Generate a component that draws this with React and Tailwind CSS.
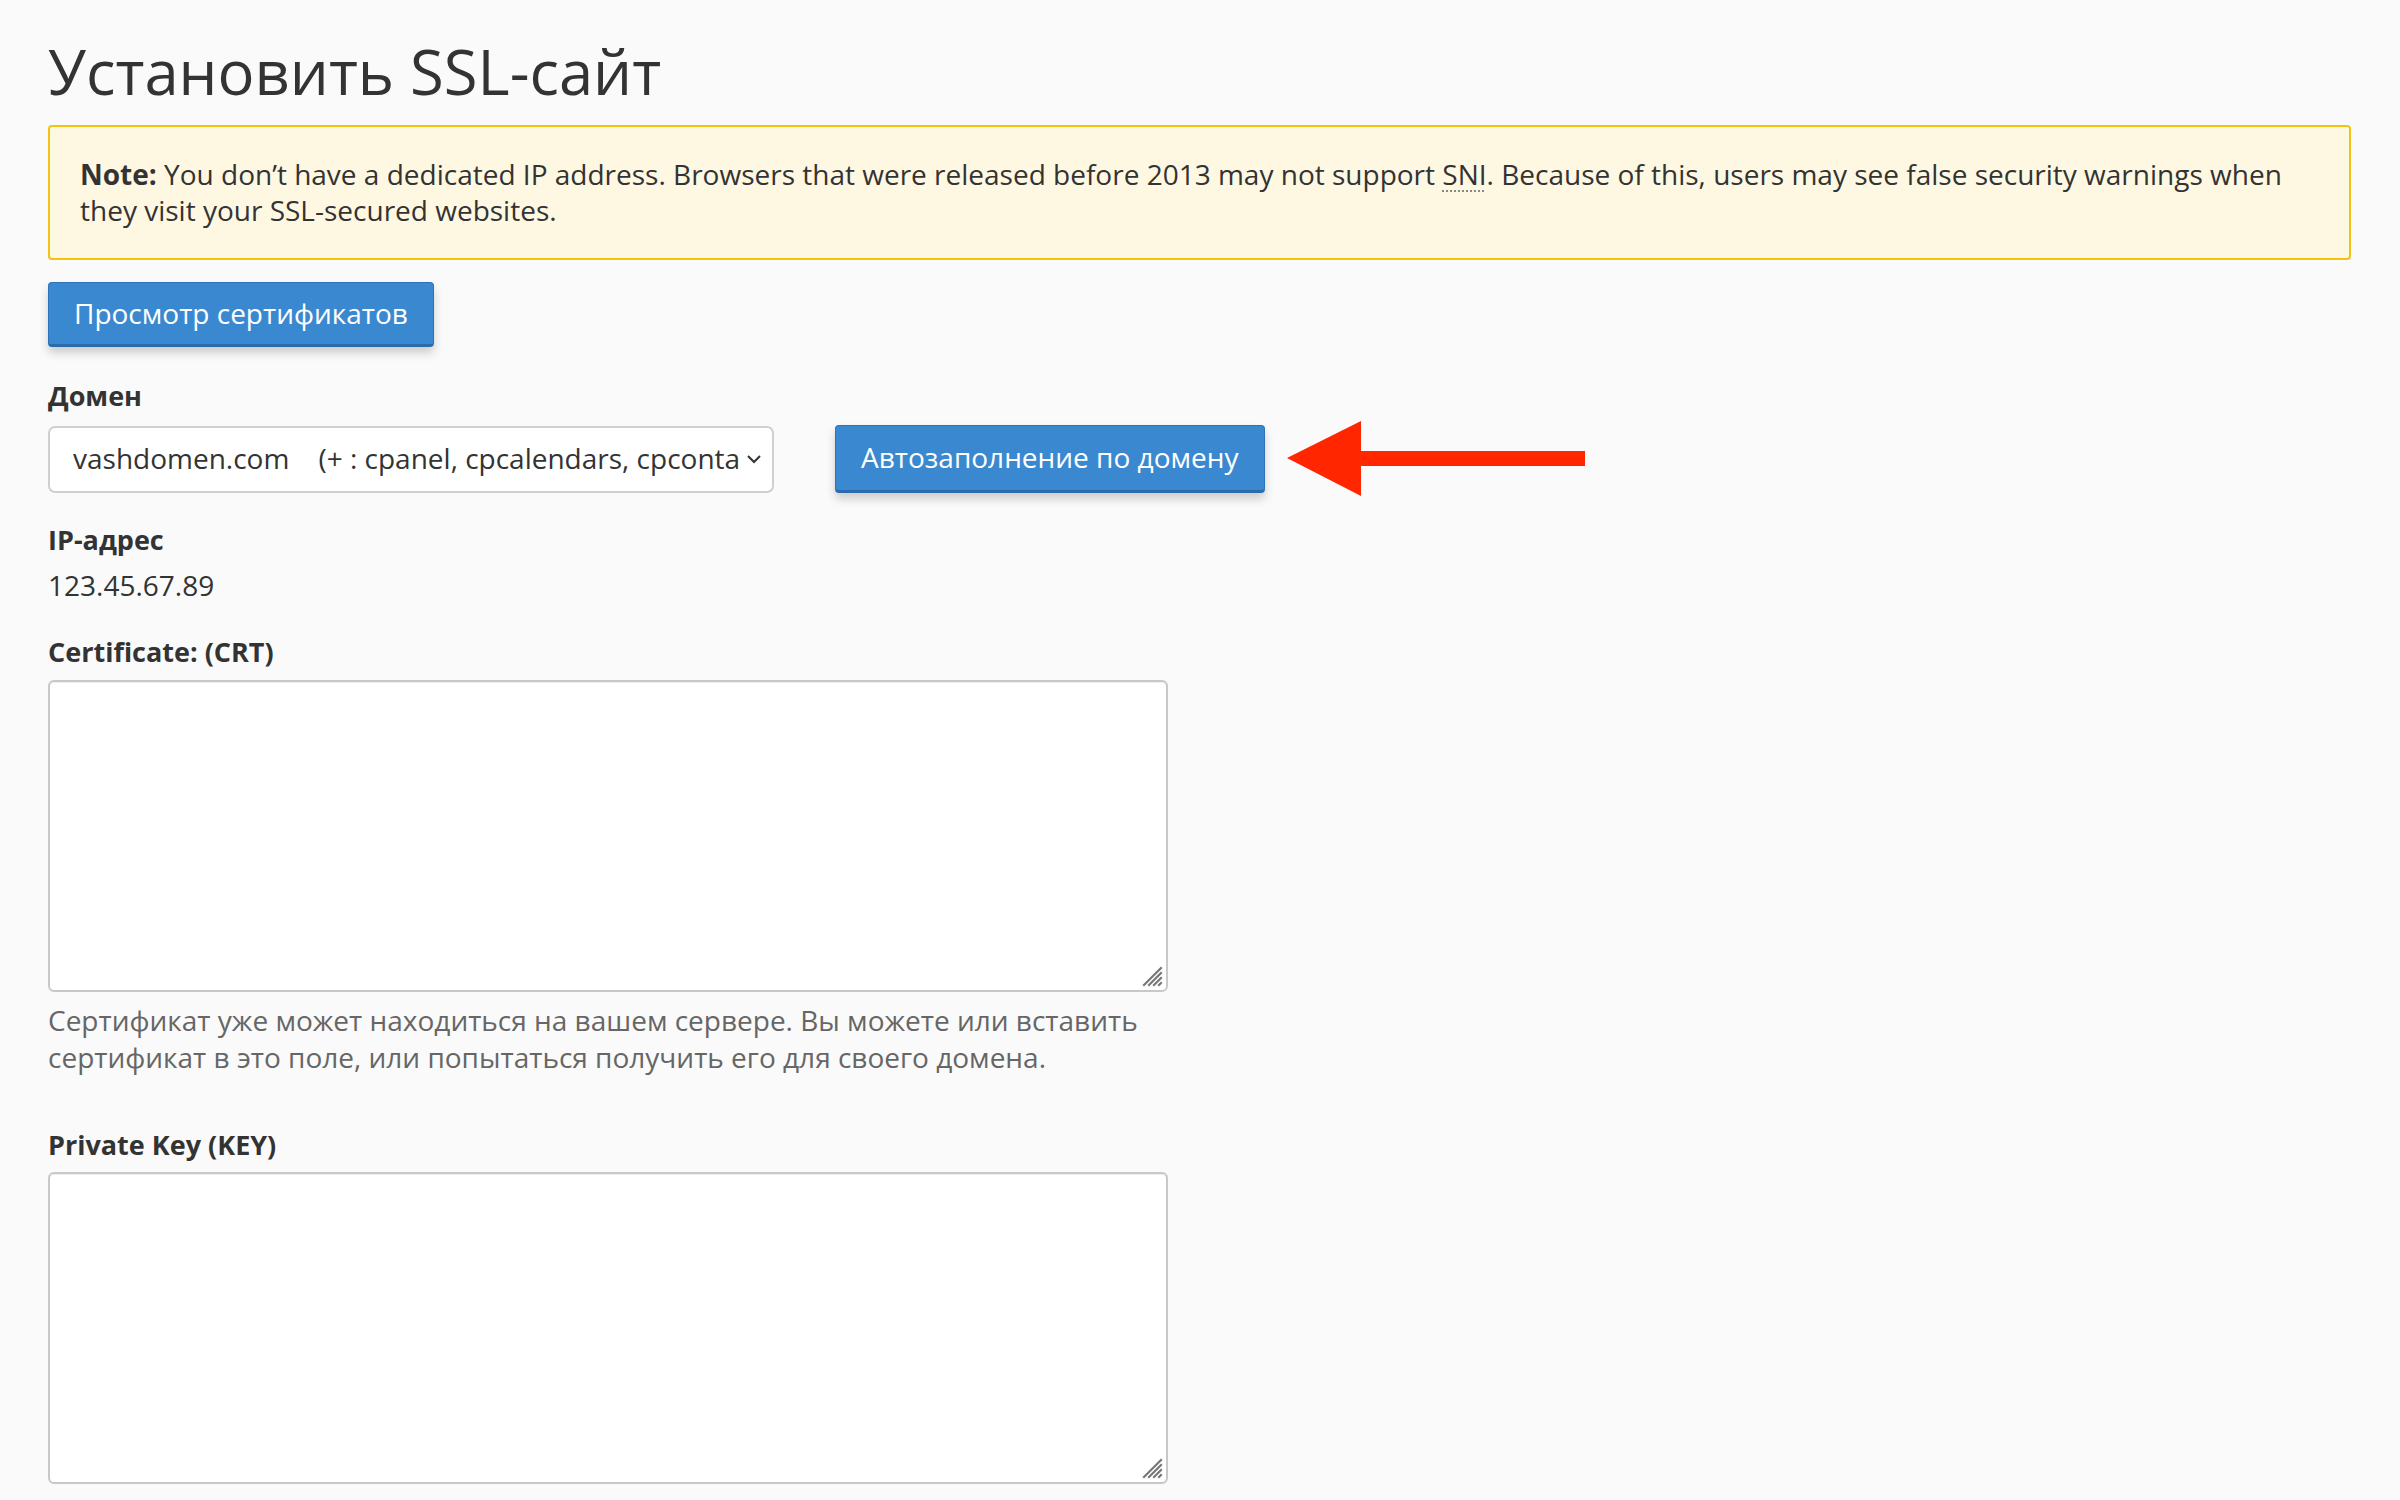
import React from "react";

function Grip() {
  return (
    <svg className="absolute right-[3px] bottom-[3px]" width="22" height="22" viewBox="0 0 22 22">
      <g stroke="#777" strokeWidth="2.2" strokeLinecap="square">
        <line x1="3" y1="20" x2="20" y2="3" />
        <line x1="8" y1="20" x2="20" y2="8" />
        <line x1="13" y1="20" x2="20" y2="13" />
        <line x1="18" y1="20" x2="20" y2="18" />
      </g>
    </svg>
  );
}

function TextBox() {
  return (
    <div className="relative w-[1120px] h-[312px] bg-white border-2 border-[#c8c8c8] rounded-[6px] shadow-[inset_0_1px_1px_rgba(0,0,0,0.075)]">
      <Grip />
    </div>
  );
}

export default function App() {
  return (
    <div
      className="min-h-[1500px] w-full bg-[#fafafa] text-[#333] pl-[48px] pr-[49px] pt-[36px] pb-[20px] text-[28px] leading-[35.7px]"
      style={{ fontFamily: '"Open Sans", "Noto Sans", sans-serif' }}
    >
      <h1 className="text-[61.5px] leading-[71px] font-normal text-[#333]">
        Установить SSL-сайт
      </h1>

      <div className="mt-[18px] border-2 border-[#f2c40f] bg-[#fef8e2] rounded-[4px] px-[30px] py-[30px] text-[28px] leading-[35.7px]">
        <span className="font-bold">Note:</span> You don’t have a dedicated IP address. Browsers that were released before 2013 may not support{" "}
        <span className="underline decoration-dotted decoration-[#888] underline-offset-[5px] decoration-[1.5px]">SNI</span>. Because of this, users may see false security warnings when they visit your SSL-secured websites.
      </div>

      <div className="mt-[22px]">
        <button className="h-[65px] px-[25px] bg-[#3a89d0] border border-[#2d73b8] border-b-[3px] border-b-[#2a6aad] rounded-[4px] text-white text-[28px] leading-[35.7px] shadow-[0_6px_10px_rgba(0,0,0,0.18)]">
          Просмотр сертификатов
        </button>
      </div>

      <div className="mt-[31px] font-bold text-[27px]">Домен</div>
      <div className="mt-[7px] flex items-center">
        <div className="w-[726px] h-[67px] bg-white border-2 border-[#cfcfcf] rounded-[7px] flex items-center pl-[23px] pr-[10px]">
          <div className="flex-1 overflow-hidden whitespace-nowrap text-[#333]">
            vashdomen.com<span className="ml-[29px]">(+ : cpanel, cpcalendars, cpcontacts, mail, webdisk, webmail, www)</span>
          </div>
          <svg className="ml-[6px] shrink-0" width="16" height="12" viewBox="0 0 16 12">
            <path d="M2 3 L8 9 L14 3" fill="none" stroke="#333" strokeWidth="2" />
          </svg>
        </div>
        <button className="ml-[61px] h-[68px] px-[25px] bg-[#3a89d0] border border-[#2d73b8] border-b-[3px] border-b-[#2a6aad] rounded-[4px] text-white text-[28px] leading-[35.7px] shadow-[0_6px_10px_rgba(0,0,0,0.18)]">
          Автозаполнение по домену
        </button>
        <svg className="ml-[22px]" width="300" height="76" viewBox="0 0 300 76">
          <polygon points="0,37 74,0 74,75" fill="#ff2600" />
          <rect x="72" y="30" width="226" height="15" fill="#ff2600" />
        </svg>
      </div>

      <div className="mt-[25px] font-bold text-[27px]">IP-адрес</div>
      <div className="mt-[10px]">123.45.67.89</div>

      <div className="mt-[30px] font-bold text-[27px]">Certificate: (CRT)</div>
      <div className="mt-[11px]">
        <TextBox />
      </div>
      <div className="mt-[10px] w-[1120px] text-[#666] leading-[37px]">
        Сертификат уже может находиться на вашем сервере. Вы можете или вставить сертификат в это поле, или попытаться получить его для своего домена.
      </div>

      <div className="mt-[51px] font-bold text-[27px]">Private Key (KEY)</div>
      <div className="mt-[9px]">
        <TextBox />
      </div>
    </div>
  );
}
